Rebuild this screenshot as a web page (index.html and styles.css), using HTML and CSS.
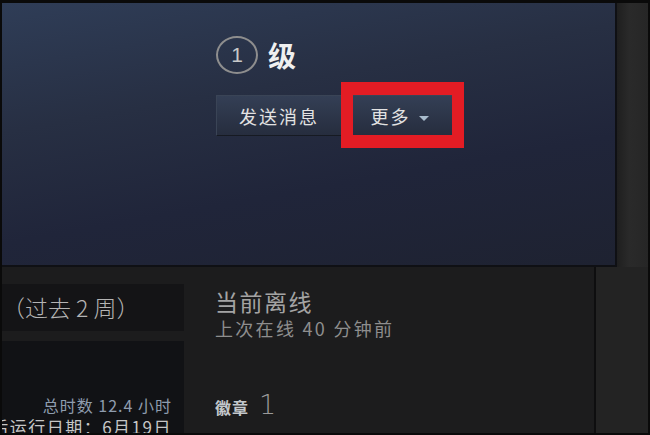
FILE: index.html
```html
<!DOCTYPE html>
<html lang="zh-CN">
<head>
  <meta charset="UTF-8">
  <title>个人资料</title>
  <link rel="stylesheet" href="styles.css">
</head>
<body>

  <div class="frame">
    <div class="top-row">
      <div class="profile-header">
        <div class="level-line">
          <span class="level-circle">1</span>
          <span class="level-label">级</span>
        </div>
        <div class="header-actions">
          <button class="header-button send-button">发送消息</button>
          <div class="more-wrap">
            <button class="header-button more-button">更多<span class="caret"></span></button>
            <!-- red highlight box drawn over the button -->
            <div class="highlight"></div>
          </div>
        </div>
      </div>
      <div class="side-strip"></div>
    </div>

    <div class="bottom-row">
      <div class="content">
        <div class="left-col">
          <div class="recent-box">（过去 2 周）</div>
          <div class="game-box">
            <p class="hours">总时数 12.4 小时</p>
            <p class="last-played">最后运行日期：6月19日</p>
          </div>
        </div>
        <div class="right-col">
          <p class="status">当前离线</p>
          <p class="last-online">上次在线 40 分钟前</p>
          <p class="badges"><span class="badges-label">徽章</span><span class="badges-count">1</span></p>
        </div>
      </div>
      <div class="side-col"></div>
    </div>
  </div>

</body>
</html>
```

FILE: styles.css
```css
body {
  margin: 0;
  background-color: #0a0a0a;
  font-family: "Noto Sans CJK SC", "Noto Sans", sans-serif;
}
.frame {
  width: 650px;
  height: 435px;
  box-sizing: border-box;
  padding: 3px 2px 2px 2px;
  display: flex;
  flex-direction: column;
  overflow: hidden;
}
.top-row {
  display: flex;
  height: 264px;
}
.profile-header {
  width: 615px;
  box-sizing: border-box;
  padding: 32px 0 0 214px;
  background: linear-gradient(170deg, #2f3d57 0%, #272f43 35%, #20253a 65%, #1e2231 100%);
  border-right: 2px solid #0f1014;
  border-bottom: 2px solid #0f1014;
}
.side-strip {
  flex: 1;
  background: linear-gradient(90deg, #1f1f1f, #2a2a2a 40%, #262626);
}
.level-line {
  display: flex;
  align-items: center;
  gap: 10px;
}
.level-circle {
  width: 42px;
  height: 38px;
  box-sizing: border-box;
  border: 2px solid #8e8e8e;
  border-radius: 50%;
  display: flex;
  align-items: center;
  justify-content: center;
  font-family: "Liberation Sans", sans-serif;
  font-size: 21px;
  color: #c8c8c8;
}
.level-label {
  font-size: 28px;
  font-weight: bold;
  letter-spacing: 2px;
  color: #f0f0f0;
}
.header-actions {
  display: flex;
  margin-top: 20px;
  gap: 2px;
}
.header-button {
  height: 41px;
  padding: 0;
  background: linear-gradient(180deg, #343f55 0%, #262d3e 100%);
  border: 1px solid #3a4456;
  border-bottom-color: #161a22;
  color: #e2e2e2;
  font-family: "Noto Sans CJK SC", sans-serif;
  font-size: 18px;
  letter-spacing: 2px;
  cursor: pointer;
}
.header-button:hover {
  background: linear-gradient(180deg, #3f4c66 0%, #2d3548 100%);
}
.send-button {
  width: 126px;
}
.more-wrap {
  position: relative;
}
.more-button {
  width: 111px;
}
.caret {
  display: inline-block;
  margin-left: 8px;
  vertical-align: middle;
  border-left: 5px solid transparent;
  border-right: 5px solid transparent;
  border-top: 5px solid #a9bccd;
}
.highlight {
  position: absolute;
  left: -3px;
  top: -13px;
  width: 99px;
  height: 40px;
  border: 12px solid #e31c24;
  border-top-width: 13px;
  border-bottom-width: 13px;
}
.bottom-row {
  flex: 1;
  display: flex;
}
.content {
  width: 592px;
  display: flex;
  background-color: #1c1c1d;
  border-right: 2px solid #0e0e0f;
}
.side-col {
  flex: 1;
  background-color: #232323;
}
.left-col {
  width: 182px;
  padding-top: 17px;
  display: flex;
  flex-direction: column;
  gap: 10px;
}
.recent-box {
  height: 47px;
  background-color: #141416;
  color: #b4b4b4;
  font-size: 23px;
  font-weight: 300;
  line-height: 47px;
  white-space: nowrap;
}
.game-box {
  flex: 1;
  background-color: #111215;
  display: flex;
  flex-direction: column;
  justify-content: flex-end;
  align-items: flex-end;
  gap: 1px;
  padding-right: 12px;
  overflow: hidden;
}
.hours {
  margin: 0;
  font-size: 16px;
  letter-spacing: 1px;
  color: #8e9cae;
  line-height: 20px;
}
.last-played {
  margin: 0 0 -5px 0;
  font-size: 17px;
  letter-spacing: 1.5px;
  color: #c6c6c6;
  line-height: 22px;
  white-space: nowrap;
}
.right-col {
  padding: 18px 0 0 31px;
}
.status {
  margin: 0;
  font-size: 23px;
  letter-spacing: 1.5px;
  color: #a3a3a3;
  line-height: 32px;
}
.last-online {
  margin: 0;
  font-size: 18px;
  letter-spacing: 2.3px;
  color: #8e8e8e;
  line-height: 22px;
}
.badges {
  margin: 50px 0 0 0;
  display: flex;
  align-items: baseline;
  gap: 10px;
}
.badges-label {
  font-size: 16px;
  font-weight: bold;
  letter-spacing: 1px;
  color: #c4c8cc;
}
.badges-count {
  font-family: "DejaVu Sans", sans-serif;
  font-size: 27px;
  font-weight: 200;
  color: #9a9a9a;
}
```
